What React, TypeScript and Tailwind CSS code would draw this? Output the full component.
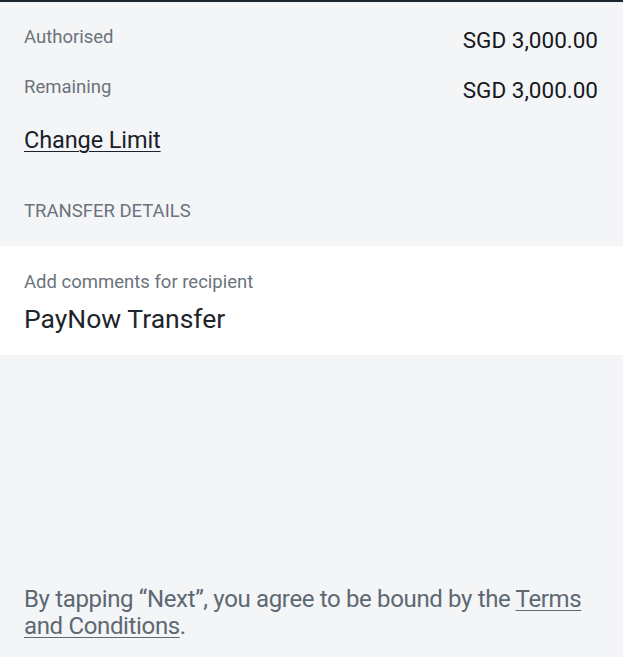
const LimitRow = ({ label, value }: { label: string; value: string }) => (
  <div className="flex h-[50px] items-start justify-between">
    <span className="text-[18.5px] leading-6 text-[#6b737c]">{label}</span>
    <span className="mt-[1px] text-[22.5px] leading-7 text-[#15191e]">{value}</span>
  </div>
);

export default function App() {
  return (
    <div
      className="min-h-screen w-full border-t-2 border-[#1b2631] bg-[#f4f5f7]"
      style={{ fontFamily: "Roboto, 'Liberation Sans', sans-serif" }}
    >
      <div className="pt-[23px] pl-6 pr-[25px]">
        <LimitRow label="Authorised" value="SGD 3,000.00" />
        <LimitRow label="Remaining" value="SGD 3,000.00" />
        <a
          href="#"
          className="mt-[1px] inline-block text-[23.5px] leading-7 tracking-[-0.1px] text-[#1a212a] underline decoration-1 underline-offset-[3px]"
        >
          Change Limit
        </a>
        <p className="mt-[44px] text-[18.5px] leading-6 text-[#6b737c]">
          TRANSFER DETAILS
        </p>
      </div>

      <div className="mt-[23px] bg-white px-6 pt-[24px] pb-[20px]">
        <p className="text-[18.5px] leading-6 text-[#6b737c]">
          Add comments for recipient
        </p>
        <p className="mt-[9px] text-[26.5px] leading-8 text-[#1f252c]">
          PayNow Transfer
        </p>
      </div>

      <p className="mt-[231px] pl-6 pr-3 text-[24px] leading-[27px] tracking-[-0.35px] text-[#5d6873]">
        By tapping “Next”, you agree to be bound by the{" "}
        <a href="#" className="underline decoration-1 underline-offset-[3px]">
          Terms and Conditions
        </a>
        .
      </p>
    </div>
  );
}
